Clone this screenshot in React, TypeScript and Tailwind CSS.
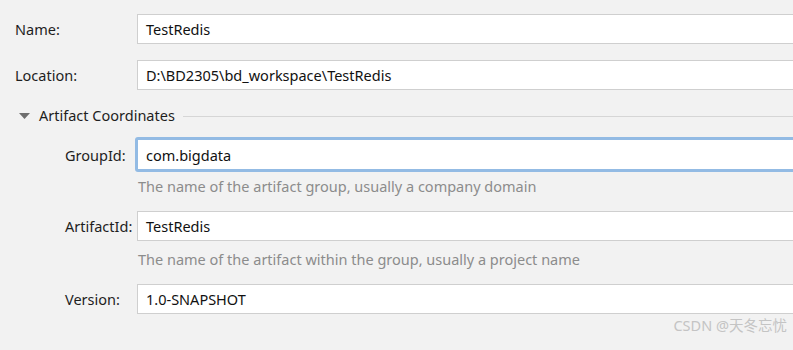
import React from 'react';

const font = { fontFamily: '"Noto Sans", "Noto Sans CJK SC", sans-serif' };

const Field: React.FC<{ label: string; value: string; inset?: boolean; focused?: boolean }> = ({ label, value, inset, focused }) => (
  <div className={`flex items-center ${focused ? 'h-[35px]' : 'h-[30px]'}`}>
    <div className={`${inset ? 'pl-[65px]' : 'pl-[15px]'} pt-[2px] w-[137px] shrink-0 text-[14.5px] text-[#1e1e1e]`}>{label}</div>
    {focused ? (
      <div className="flex-1 -ml-[2px] -mr-[10px] h-[35px] rounded-[3px] border-[3px] border-[#93bbe4] bg-white flex items-center pl-[8px] pt-[2px] text-[14.5px] text-[#111]">
        {value}
      </div>
    ) : (
      <div className="flex-1 -mr-[10px] h-[30px] border border-[#cfcfcf] bg-white flex items-center pl-[8px] pt-[2px] text-[14.5px] text-[#111]">
        {value}
      </div>
    )}
  </div>
);

const Hint: React.FC<{ text: string }> = ({ text }) => (
  <div className="pl-[138px] h-[20px] flex items-center text-[14.5px] text-[#8c8c8c]">{text}</div>
);

export default function App() {
  return (
    <div className="relative w-full h-[350px] bg-[#f2f2f2] overflow-hidden" style={font}>
      <div className="pt-[14px]">
        <Field label="Name:" value="TestRedis" />
        <div className="h-[16px]" />
        <Field label="Location:" value="D:\BD2305\bd_workspace\TestRedis" />
        <div className="h-[14px] mt-[19px] flex items-center">
          <div className="pl-[19px] w-[39px] shrink-0">
            <svg width="11" height="6" viewBox="0 0 11 6">
              <path d="M0 0 L11 0 L5.5 6 Z" fill="#6e6e6e" />
            </svg>
          </div>
          <span className="text-[14.5px] text-[#1e1e1e] whitespace-nowrap">Artifact Coordinates</span>
          <div className="flex-1 ml-[8px] h-px bg-[#d6d6d6]" />
        </div>
        <div className="h-[14px]" />
        <Field label="GroupId:" value="com.bigdata" inset focused />
        <div className="h-[5px]" />
        <Hint text="The name of the artifact group, usually a company domain" />
        <div className="h-[14px]" />
        <Field label="ArtifactId:" value="TestRedis" inset />
        <div className="h-[9px]" />
        <Hint text="The name of the artifact within the group, usually a project name" />
        <div className="h-[14px]" />
        <Field label="Version:" value="1.0-SNAPSHOT" inset />
      </div>
      <div className="absolute right-[6px] bottom-[13px] text-[14.5px] text-[#c4c4c4]">CSDN @天冬忘忧</div>
    </div>
  );
}
